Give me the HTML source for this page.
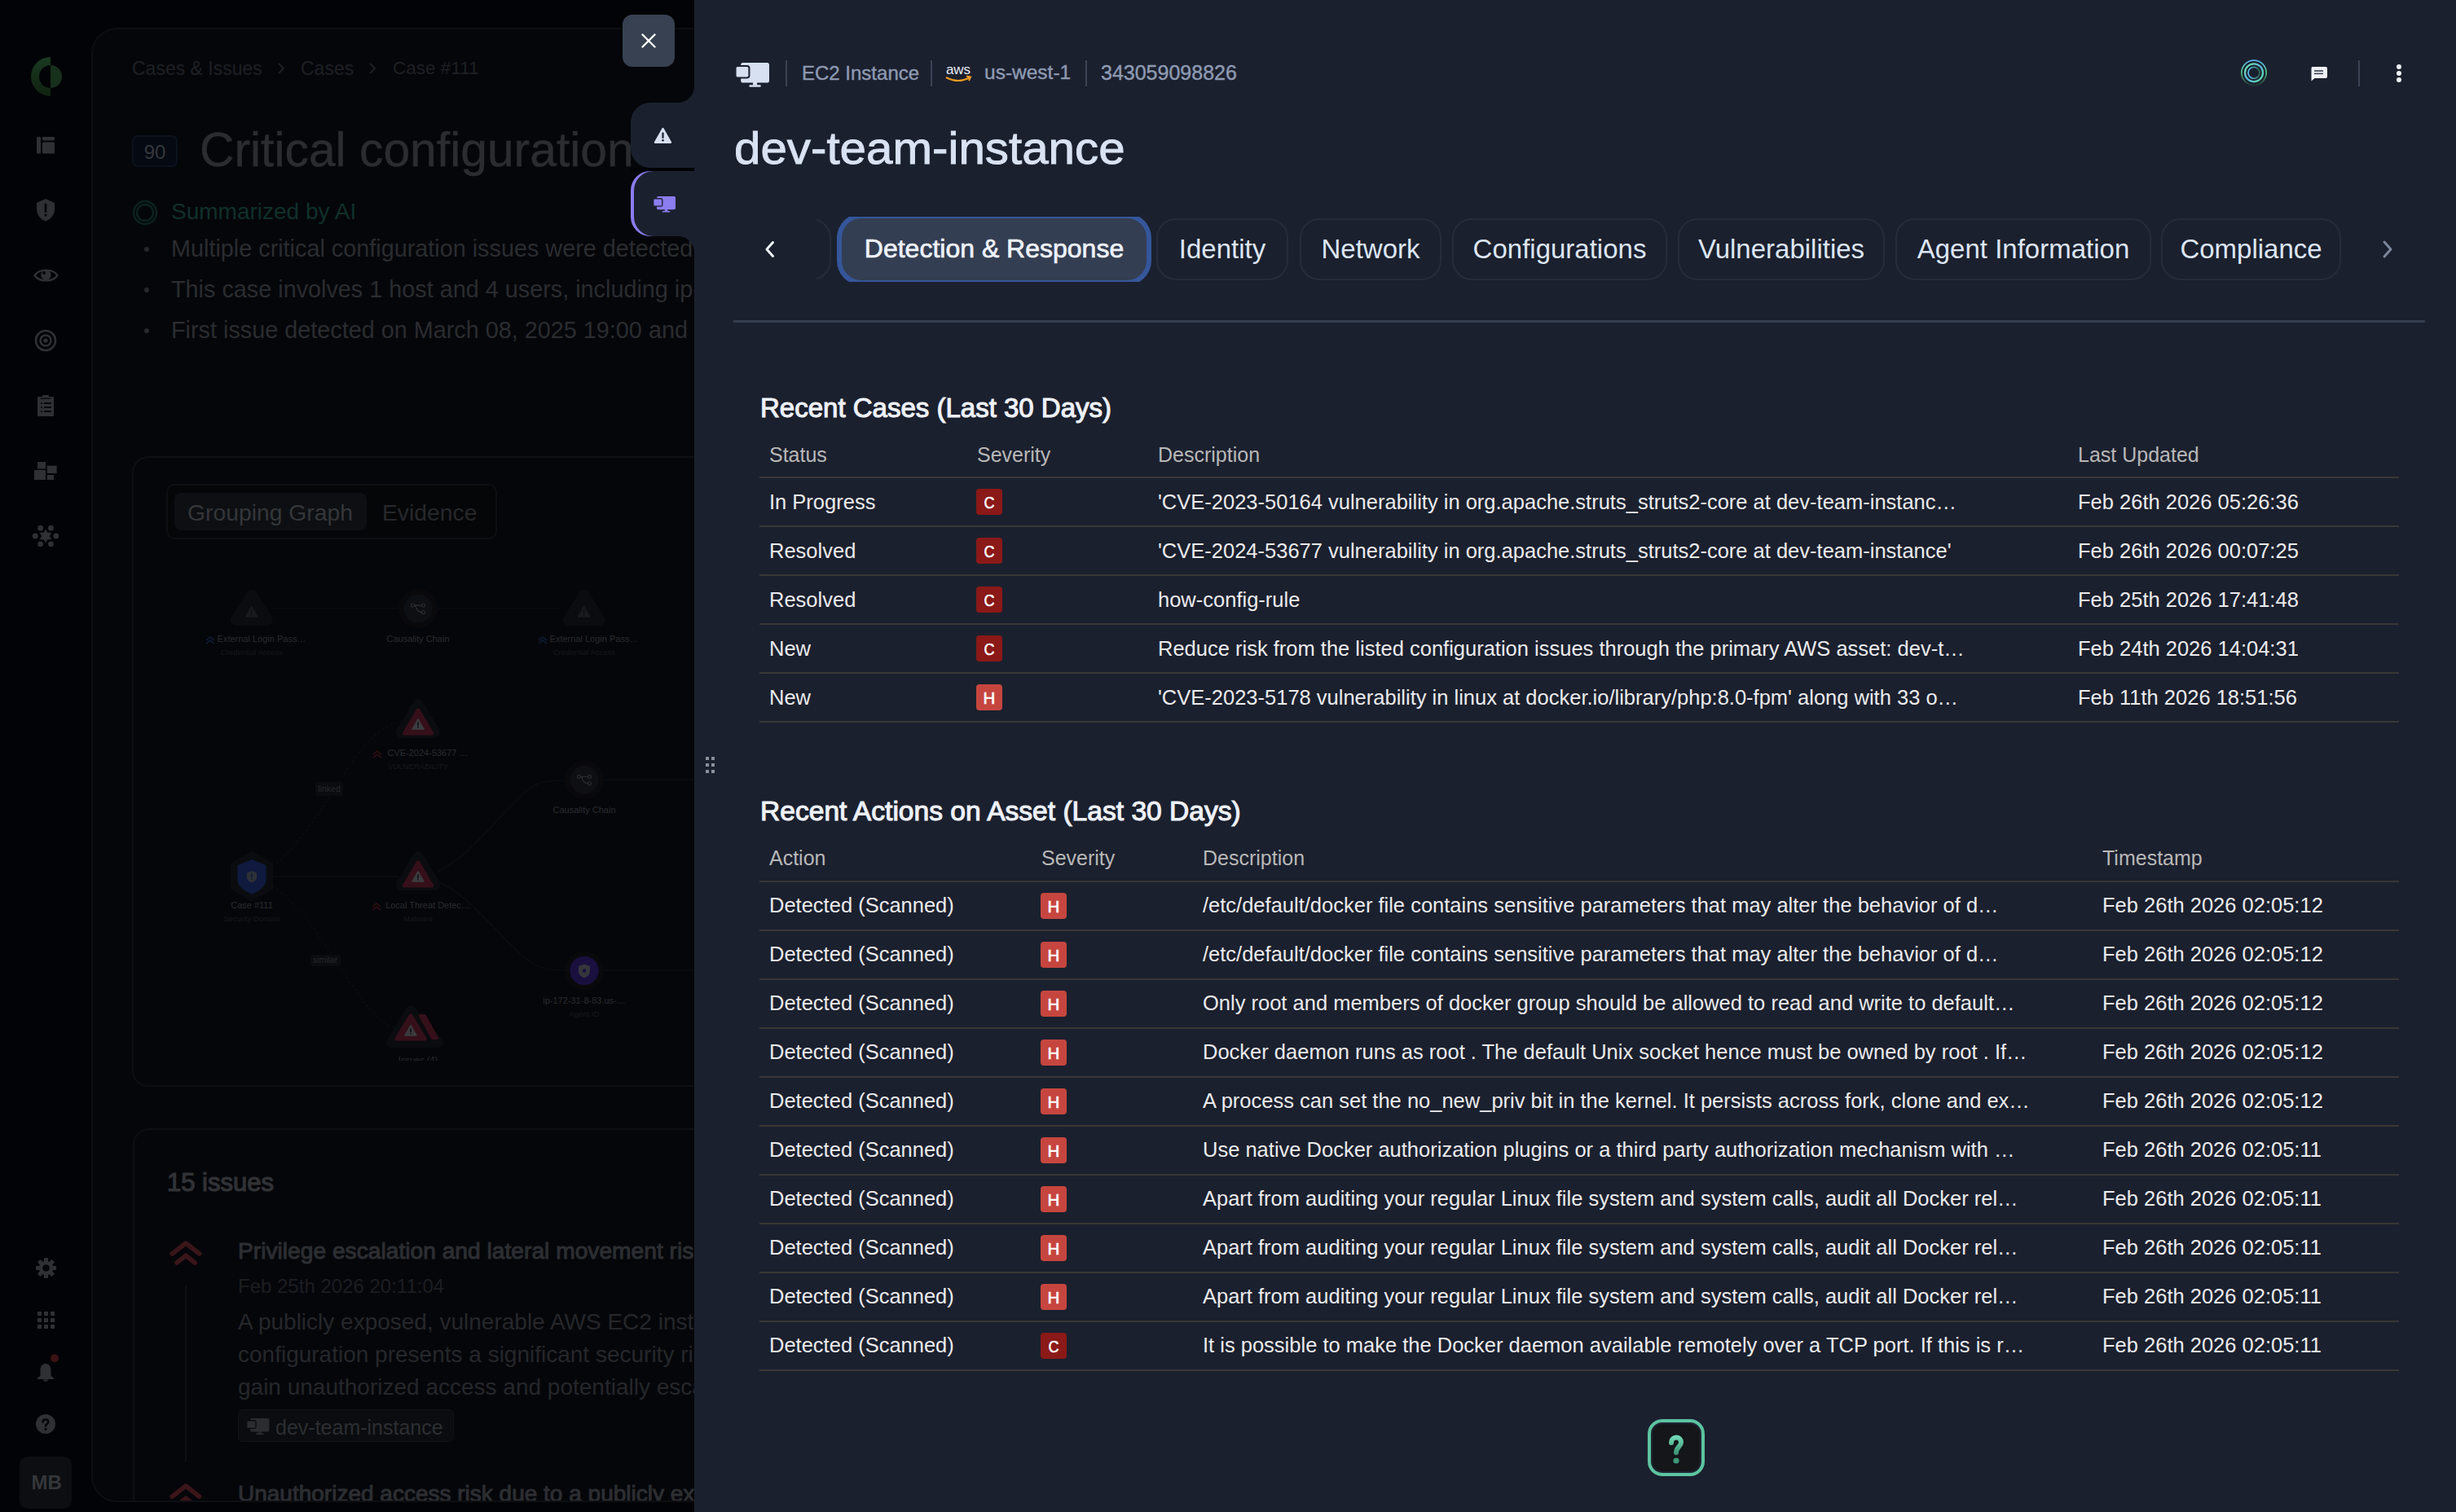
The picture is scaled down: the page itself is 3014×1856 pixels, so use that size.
<!DOCTYPE html>
<html><head><meta charset="utf-8"><style>
html,body{margin:0;padding:0;}
body{width:3014px;height:1856px;position:relative;overflow:hidden;background:#020306;font-family:"Liberation Sans", sans-serif;}
.t{position:absolute;white-space:nowrap;line-height:1;}
.r{position:absolute;}
</style></head><body>
<div class="r" style="left:0;top:0;width:852px;height:1856px;overflow:hidden">
<div class="r" style="left:112px;top:34px;width:900px;height:1810px;background:#05060a;border:2px solid #0c0e12;border-radius:32px;box-sizing:border-box;"></div>
<svg class="r" style="left:36px;top:70px" width="50" height="50" viewBox="36 70 50 50"><defs><linearGradient id="lg" x1="0" y1="0" x2="0" y2="1"><stop offset="0" stop-color="#1a3a22"/><stop offset="1" stop-color="#10220f"/></linearGradient></defs><path d="M62 70 A24 24 0 0 0 62 118 L62 108 A14 14 0 0 1 62 80 Z" fill="url(#lg)"/><path d="M62 80 A14 14 0 0 1 62 108 Z" fill="#16301c"/></svg>
<svg class="r" style="left:45px;top:168px" width="22" height="20.5"><rect x="0" y="0" width="5" height="20.5" rx="1" fill="#2f3033"/><rect x="7" y="0" width="15" height="4.5" rx="1" fill="#2f3033"/><rect x="7" y="6.5" width="15" height="14" rx="1" fill="#2f3033"/></svg>
<svg class="r" style="left:45px;top:244px" width="22" height="27.5" viewBox="0 0 24 28" preserveAspectRatio="none"><path d="M12 0 L24 5 V13 C24 21 18 26 12 28 C6 26 0 21 0 13 V5 Z" fill="#2f3033"/><rect x="10.5" y="6" width="3" height="11" fill="#05060a"/><rect x="10.5" y="19" width="3" height="3" fill="#05060a"/></svg>
<svg class="r" style="left:41px;top:328px" width="31" height="20" viewBox="0 0 31 20"><path d="M1.5 10 C7 1.5 24 1.5 29.5 10 C24 18.5 7 18.5 1.5 10 Z" fill="none" stroke="#2f3033" stroke-width="2.4"/><circle cx="15.5" cy="9.5" r="6.2" fill="#2f3033"/><circle cx="13" cy="7" r="2" fill="#05060a"/></svg>
<svg class="r" style="left:42px;top:404px" width="28" height="28"><circle cx="14" cy="14" r="12" fill="none" stroke="#2f3033" stroke-width="2.6"/><circle cx="14" cy="14" r="6.5" fill="none" stroke="#2f3033" stroke-width="2.6"/><circle cx="14" cy="14" r="2.6" fill="#2f3033"/></svg>
<svg class="r" style="left:46px;top:485px" width="20" height="26"><rect x="0" y="2" width="20" height="24" rx="1" fill="#2f3033"/><rect x="6" y="0" width="8" height="3" rx="1" fill="#2f3033"/><rect x="3.5" y="3.5" width="13" height="1.2" fill="#05060a"/><rect x="4" y="9" width="2" height="2" fill="#05060a"/><rect x="8" y="9" width="9" height="2" fill="#05060a"/><rect x="4" y="14" width="2" height="2" fill="#05060a"/><rect x="8" y="14" width="9" height="2" fill="#05060a"/><rect x="4" y="19" width="2" height="2" fill="#05060a"/><rect x="8" y="19" width="9" height="2" fill="#05060a"/></svg>
<svg class="r" style="left:42px;top:567px" width="28" height="23"><rect x="4" y="0" width="10" height="8.5" fill="#2f3033"/><rect x="0" y="10" width="14" height="12" fill="#2f3033"/><rect x="15.7" y="4.6" width="12" height="9.4" fill="#2f3033"/><rect x="15.7" y="16" width="8.3" height="6" fill="#2f3033"/></svg>
<svg class="r" style="left:40px;top:642px" width="32" height="32"><circle cx="28.8" cy="16.0" r="3.4" fill="#2f3033"/><circle cx="22.4" cy="25.8" r="3.4" fill="#2f3033"/><circle cx="9.6" cy="25.8" r="3.4" fill="#2f3033"/><circle cx="3.2" cy="16.0" r="3.4" fill="#2f3033"/><circle cx="9.6" cy="6.2" r="3.4" fill="#2f3033"/><circle cx="22.4" cy="6.2" r="3.4" fill="#2f3033"/><polygon points="16.0,7.5 13.6,11.8 8.6,11.8 11.2,16.0 8.6,20.2 13.6,20.2 16.0,24.5 18.4,20.2 23.4,20.3 20.8,16.0 23.4,11.8 18.4,11.8" fill="#2f3033"/></svg>
<svg class="r" style="left:43.5px;top:1543.5px" width="25" height="25"><rect x="10" y="0" width="5" height="6" rx="0.8" fill="#2f3033" transform="rotate(0 12.5 12.5)"/><rect x="10" y="0" width="5" height="6" rx="0.8" fill="#2f3033" transform="rotate(45 12.5 12.5)"/><rect x="10" y="0" width="5" height="6" rx="0.8" fill="#2f3033" transform="rotate(90 12.5 12.5)"/><rect x="10" y="0" width="5" height="6" rx="0.8" fill="#2f3033" transform="rotate(135 12.5 12.5)"/><rect x="10" y="0" width="5" height="6" rx="0.8" fill="#2f3033" transform="rotate(180 12.5 12.5)"/><rect x="10" y="0" width="5" height="6" rx="0.8" fill="#2f3033" transform="rotate(225 12.5 12.5)"/><rect x="10" y="0" width="5" height="6" rx="0.8" fill="#2f3033" transform="rotate(270 12.5 12.5)"/><rect x="10" y="0" width="5" height="6" rx="0.8" fill="#2f3033" transform="rotate(315 12.5 12.5)"/><circle cx="12.5" cy="12.5" r="8.8" fill="#2f3033"/><circle cx="12.5" cy="12.5" r="4.3" fill="#05060a"/></svg>
<svg class="r" style="left:46px;top:1610px" width="21" height="21"><rect x="0" y="0" width="5" height="5" fill="#2f3033"/><rect x="0" y="8" width="5" height="5" fill="#2f3033"/><rect x="0" y="16" width="5" height="5" fill="#2f3033"/><rect x="8" y="0" width="5" height="5" fill="#2f3033"/><rect x="8" y="8" width="5" height="5" fill="#2f3033"/><rect x="8" y="16" width="5" height="5" fill="#2f3033"/><rect x="16" y="0" width="5" height="5" fill="#2f3033"/><rect x="16" y="8" width="5" height="5" fill="#2f3033"/><rect x="16" y="16" width="5" height="5" fill="#2f3033"/></svg>
<svg class="r" style="left:45px;top:1660px" width="30" height="36" viewBox="0 0 30 36"><path d="M11 14 C6 14 4.5 18 4.5 22 V29 L1 31.5 Q0.5 33 2 33 H20 Q21.5 33 21 31.5 L17.5 29 V22 C17.5 18 16 14 11 14 Z" fill="#2f3033"/><path d="M8 33.5 H14 C14 36.5 8 36.5 8 33.5 Z" fill="#2f3033"/><circle cx="22" cy="7.2" r="5" fill="#3b1115"/></svg>
<svg class="r" style="left:44px;top:1736px" width="24" height="24"><circle cx="12" cy="12" r="12" fill="#2f3033"/><path d="M8.6 9.5 C8.6 5.5 15.4 5.5 15.4 9.3 C15.4 11.8 12 12 12 14.5" fill="none" stroke="#05060a" stroke-width="2.6" stroke-linecap="round"/><circle cx="12" cy="18.3" r="1.6" fill="#05060a"/></svg>
<div class="r" style="left:24px;top:1788px;width:64px;height:64px;background:#0d0e11;border-radius:10px;"></div>
<div class="t" style="left:38.5px;top:1808.1px;font-size:24px;color:#34363a;font-weight:700;">MB</div>
<div class="t" style="left:162px;top:72.5px;font-size:23px;color:#1d2025;font-weight:400;">Cases &amp; Issues</div>
<svg class="r" style="left:340px;top:76px" width="10" height="16"><path d="M2 2 L8 8 L2 14" fill="none" stroke="#1d2025" stroke-width="2"/></svg>
<div class="t" style="left:369px;top:72.5px;font-size:23px;color:#1d2025;font-weight:400;">Cases</div>
<svg class="r" style="left:452px;top:76px" width="10" height="16"><path d="M2 2 L8 8 L2 14" fill="none" stroke="#1d2025" stroke-width="2"/></svg>
<div class="t" style="left:482px;top:72.9px;font-size:22.5px;color:#1d2025;font-weight:400;">Case #111</div>
<div class="r" style="left:162px;top:166px;width:56px;height:39px;background:#050a12;border:2px solid #0b121d;border-radius:7px;box-sizing:border-box;"></div>
<div class="t" style="left:162px;width:56px;text-align:center;top:174.6px;font-size:24px;color:#34373c;">90</div>
<div class="t" style="left:245px;top:155.0px;font-size:58.8px;color:#2a2c30;font-weight:400;-webkit-text-stroke:0.5px #2a2c30;">Critical configuration</div>
<svg class="r" style="left:162px;top:245px" width="32" height="32"><circle cx="16" cy="16" r="14" fill="none" stroke="#0c221c" stroke-width="2.5"/><circle cx="16" cy="16" r="10" fill="none" stroke="#0c221c" stroke-width="2.5"/></svg>
<div class="t" style="left:210px;top:246.2px;font-size:28px;color:#10302a;font-weight:400;">Summarized by AI</div>
<div class="r" style="left:177px;top:303px;width:6px;height:6px;background:#26282c;border-radius:3px;"></div>
<div class="t" style="left:210px;top:290.5px;font-size:28.8px;color:#2a2c30;font-weight:400;">Multiple critical configuration issues were detected on the host</div>
<div class="r" style="left:177px;top:353px;width:6px;height:6px;background:#26282c;border-radius:3px;"></div>
<div class="t" style="left:210px;top:340.5px;font-size:28.8px;color:#2a2c30;font-weight:400;">This case involves 1 host and 4 users, including ip-172-31-8-83</div>
<div class="r" style="left:177px;top:403px;width:6px;height:6px;background:#26282c;border-radius:3px;"></div>
<div class="t" style="left:210px;top:390.5px;font-size:28.8px;color:#2a2c30;font-weight:400;">First issue detected on March 08, 2025 19:00 and the latest</div>
<div class="r" style="left:162px;top:560px;width:800px;height:774px;background:#05060a;border:2px solid #0d0f13;border-radius:20px;box-sizing:border-box;"></div>
<div class="r" style="left:204px;top:594px;width:406px;height:68px;background:#050607;border:2px solid #0d0f12;border-radius:10px;box-sizing:border-box;"></div>
<div class="r" style="left:214px;top:605px;width:236px;height:46px;background:#0d0f13;border-radius:8px;"></div>
<div class="t" style="left:230px;top:614.9px;font-size:28.3px;color:#34363a;font-weight:400;">Grouping Graph</div>
<div class="t" style="left:469px;top:614.9px;font-size:28.3px;color:#26282c;font-weight:400;">Evidence</div>
<svg class="r" style="left:163px;top:561px" width="700" height="773" viewBox="163 561 700 773"><path d="M334 747 H489 M537 747 H686" stroke="#0c0d10" stroke-width="1.5" fill="none"/><path d="M330 1076 H489" stroke="#0c0d10" stroke-width="1.5" fill="none"/><path d="M330 1068 C400 1010 420 930 470 895 C478 889 486 887 492 887" stroke="#0c0d10" stroke-width="1.5" fill="none" stroke-dasharray="3 3"/><path d="M330 1084 C380 1120 410 1180 440 1220 C460 1250 475 1261 486 1261" stroke="#0c0d10" stroke-width="1.5" fill="none" stroke-dasharray="3 3"/><path d="M537 1070 C580 1050 620 990 650 968 C660 960 670 958 693 958 M741 957 H870" stroke="#0c0d10" stroke-width="1.5" fill="none"/><path d="M537 1082 C580 1100 620 1160 650 1180 C662 1189 672 1191 699 1191 M735 1191 H870" stroke="#0c0d10" stroke-width="1.5" fill="none"/><path d="M308.7 731 L327.7 761 H289.7 Z" fill="#0b0c0f" stroke="#0b0c0f" stroke-width="14" stroke-linejoin="round"/><path d="M308.7 745.0 L315.7 757.0 H301.7 Z" fill="#1a1b1e" stroke="#1a1b1e" stroke-width="1.5" stroke-linejoin="round"/><rect x="307.9" y="748.5" width="1.6" height="4.5" fill="#0c0d10"/><rect x="307.9" y="754.0" width="1.6" height="1.5" fill="#0c0d10"/><path d="M716.6 731 L735.6 761 H697.6 Z" fill="#0b0c0f" stroke="#0b0c0f" stroke-width="14" stroke-linejoin="round"/><path d="M716.6 745.0 L723.6 757.0 H709.6 Z" fill="#1a1b1e" stroke="#1a1b1e" stroke-width="1.5" stroke-linejoin="round"/><rect x="715.8000000000001" y="748.5" width="1.6" height="4.5" fill="#0c0d10"/><rect x="715.8000000000001" y="754.0" width="1.6" height="1.5" fill="#0c0d10"/><circle cx="513" cy="747" r="24" fill="#09090c"/><circle cx="513" cy="747" r="17.5" fill="#0e0f12"/><path d="M508.5 743 H518.5 M509.5 743 C511 748 513 751.5 517 751.5" stroke="#2a2b2e" stroke-width="1.3" fill="none"/><circle cx="506.5" cy="743" r="2" fill="#0e0f12" stroke="#2a2b2e" stroke-width="1.2"/><circle cx="519.5" cy="743" r="2" fill="#0e0f12" stroke="#2a2b2e" stroke-width="1.2"/><circle cx="519.5" cy="751.5" r="2" fill="#0e0f12" stroke="#2a2b2e" stroke-width="1.2"/><circle cx="717" cy="957.3" r="24" fill="#09090c"/><circle cx="717" cy="957.3" r="17.5" fill="#0e0f12"/><path d="M712.5 953.3 H722.5 M713.5 953.3 C715 958.3 717 961.8 721 961.8" stroke="#2a2b2e" stroke-width="1.3" fill="none"/><circle cx="710.5" cy="953.3" r="2" fill="#0e0f12" stroke="#2a2b2e" stroke-width="1.2"/><circle cx="723.5" cy="953.3" r="2" fill="#0e0f12" stroke="#2a2b2e" stroke-width="1.2"/><circle cx="723.5" cy="961.8" r="2" fill="#0e0f12" stroke="#2a2b2e" stroke-width="1.2"/><path d="M513 865 L533.0 899 H493.0 Z" fill="#0b0c0f" stroke="#0b0c0f" stroke-width="14" stroke-linejoin="round"/><path d="M513 872 L529.5 900 H496.5 Z" fill="#35101a" stroke="#35101a" stroke-width="5" stroke-linejoin="round"/><path d="M513 883.0 L520.0 895.0 H506.0 Z" fill="#3b3c3f" stroke="#3b3c3f" stroke-width="1.5" stroke-linejoin="round"/><rect x="512.2" y="886.5" width="1.6" height="4.5" fill="#0c0d10"/><rect x="512.2" y="892.0" width="1.6" height="1.5" fill="#0c0d10"/><path d="M513 1052 L533.0 1086 H493.0 Z" fill="#0b0c0f" stroke="#0b0c0f" stroke-width="14" stroke-linejoin="round"/><path d="M513 1059 L529.5 1087 H496.5 Z" fill="#35101a" stroke="#35101a" stroke-width="5" stroke-linejoin="round"/><path d="M513 1070.0 L520.0 1082.0 H506.0 Z" fill="#3b3c3f" stroke="#3b3c3f" stroke-width="1.5" stroke-linejoin="round"/><rect x="512.2" y="1073.5" width="1.6" height="4.5" fill="#0c0d10"/><rect x="512.2" y="1079.0" width="1.6" height="1.5" fill="#0c0d10"/><path d="M309 1047 L333 1061 V1090 L309 1104 L285 1090 V1061 Z" fill="#0b0c0f" stroke="#0b0c0f" stroke-width="4" stroke-linejoin="round"/><path d="M309 1055 L326.5 1062 V1080 C326.5 1088 318 1094 309 1097.5 C300 1094 291.5 1088 291.5 1080 V1062 Z" fill="#0f1a3e"/><path d="M309 1069 L315 1071.5 V1077 C315 1080 312 1082.5 309 1083.5 C306 1082.5 303 1080 303 1077 V1071.5 Z" fill="#2e3036"/><rect x="308.2" y="1072" width="1.6" height="5" fill="#0f1a3e"/><rect x="308.2" y="1078.5" width="1.6" height="1.6" fill="#0f1a3e"/><circle cx="717" cy="1191.5" r="24" fill="#09090c"/><circle cx="717" cy="1191.5" r="17.6" fill="#1a1040"/><path d="M717 1183.5 L724 1186 V1192 C724 1196 721 1199 717 1200.5 C713 1199 710 1196 710 1192 V1186 Z" fill="#35363a"/><circle cx="717" cy="1191.5" r="2.2" fill="#1a1040"/><path d="M504 1240 L538 1280 H480 Z" fill="#0b0c0f" stroke="#0b0c0f" stroke-width="12" stroke-linejoin="round"/><path d="M521 1247 L536 1274 H531 L516 1247 Z" fill="#35101a" stroke="#35101a" stroke-width="4" stroke-linejoin="round"/><path d="M504 1247 L521.0 1275 H487.0 Z" fill="#35101a" stroke="#35101a" stroke-width="5" stroke-linejoin="round"/><path d="M504 1259.0 L511.0 1271.0 H497.0 Z" fill="#3b3c3f" stroke="#3b3c3f" stroke-width="1.5" stroke-linejoin="round"/><rect x="503.2" y="1262.5" width="1.6" height="4.5" fill="#0c0d10"/><rect x="503.2" y="1268.0" width="1.6" height="1.5" fill="#0c0d10"/><path d="M253 786 L258 782 L263 786 M253 790 L258 786 L263 790" stroke="#0e1a2e" stroke-width="1.8" fill="none"/><path d="M661 786 L666 782 L671 786 M661 790 L666 786 L671 790" stroke="#0e1a2e" stroke-width="1.8" fill="none"/><path d="M458 926 L463 922 L468 926 M458 930 L463 926 L468 930" stroke="#2a0c10" stroke-width="1.8" fill="none"/><path d="M457 1113 L462 1109 L467 1113 M457 1117 L462 1113 L467 1117" stroke="#2a0c10" stroke-width="1.8" fill="none"/></svg>
<div class="t" style="left:171px;width:300px;text-align:center;top:779.4px;font-size:11px;color:#2a2c30;">External Login Pass…</div>
<div class="t" style="left:159px;width:300px;text-align:center;top:796.3px;font-size:9.5px;color:#17181b;">Credential Access</div>
<div class="t" style="left:363px;width:300px;text-align:center;top:779.4px;font-size:11px;color:#2a2c30;">Causality Chain</div>
<div class="t" style="left:579px;width:300px;text-align:center;top:779.4px;font-size:11px;color:#2a2c30;">External Login Pass…</div>
<div class="t" style="left:567px;width:300px;text-align:center;top:796.3px;font-size:9.5px;color:#17181b;">Credential Access</div>
<div class="t" style="left:375px;width:300px;text-align:center;top:919.4px;font-size:11px;color:#2a2c30;">CVE-2024-53677 …</div>
<div class="t" style="left:363px;width:300px;text-align:center;top:936.3px;font-size:9.5px;color:#17181b;">VULNERABILITY</div>
<div class="r" style="left:387px;top:960px;width:34px;height:17px;background:#0b0c0f;border-radius:3px;"></div>
<div class="t" style="left:254px;width:300px;text-align:center;top:962.7px;font-size:10.5px;color:#26282b;">linked</div>
<div class="t" style="left:567px;width:300px;text-align:center;top:989.4px;font-size:11px;color:#2a2c30;">Causality Chain</div>
<div class="t" style="left:159px;width:300px;text-align:center;top:1106.4px;font-size:11px;color:#2a2c30;">Case #111</div>
<div class="t" style="left:159px;width:300px;text-align:center;top:1123.3px;font-size:9.5px;color:#17181b;">Security Domain</div>
<div class="t" style="left:375px;width:300px;text-align:center;top:1106.4px;font-size:11px;color:#2a2c30;">Local Threat Detec…</div>
<div class="t" style="left:363px;width:300px;text-align:center;top:1123.3px;font-size:9.5px;color:#17181b;">Malware</div>
<div class="r" style="left:381px;top:1172px;width:37px;height:14px;background:#0b0c0f;border-radius:3px;"></div>
<div class="t" style="left:249px;width:300px;text-align:center;top:1172.7px;font-size:10.5px;color:#26282b;">similar</div>
<div class="t" style="left:567px;width:300px;text-align:center;top:1223.4px;font-size:11px;color:#2a2c30;">ip-172-31-8-83.us-…</div>
<div class="t" style="left:567px;width:300px;text-align:center;top:1240.3px;font-size:9.5px;color:#17181b;">Agent ID</div>
<div class="r" style="left:163px;top:1280px;width:700px;height:22px;overflow:hidden"><div class="t" style="left:200px;width:300px;text-align:center;top:15.9px;font-size:11px;color:#2a2c30;">Issues (4)</div>
</div>
<div class="r" style="left:0;top:0;width:852px;height:1842px;overflow:hidden"><div class="r" style="left:163px;top:1385px;width:800px;height:600px;background:#05060a;border:2px solid #0d0f13;border-radius:20px;box-sizing:border-box;"></div>
<div class="t" style="left:205px;top:1435.7px;font-size:31px;color:#303236;font-weight:400;-webkit-text-stroke:1.2px #303236">15 issues</div>
<svg class="r" style="left:205px;top:1515px" width="46" height="46"><path d="M6.3 23.9 L23 10.9 L39.7 23.9" stroke="#3a1519" stroke-width="5.7" fill="none" stroke-linecap="round" stroke-linejoin="round"/><path d="M12 35 L23 26.3 L34 35" stroke="#3a1519" stroke-width="5.7" fill="none" stroke-linecap="round" stroke-linejoin="round"/></svg>
<div class="r" style="left:227px;top:1578px;width:2px;height:217px;background:#0e1013;"></div>
<div class="t" style="left:292px;top:1521.0px;font-size:28.2px;color:#2c2e32;font-weight:400;-webkit-text-stroke:1px #2c2e32">Privilege escalation and lateral movement risk</div>
<div class="t" style="left:292px;top:1566.6px;font-size:24px;color:#1c1e22;font-weight:400;">Feb 25th 2026 20:11:04</div>
<div class="t" style="left:292px;top:1609.2px;font-size:28px;color:#25272b;font-weight:400;">A publicly exposed, vulnerable AWS EC2 instance</div>
<div class="t" style="left:292px;top:1649.2px;font-size:28px;color:#25272b;font-weight:400;">configuration presents a significant security risk</div>
<div class="t" style="left:292px;top:1689.2px;font-size:28px;color:#25272b;font-weight:400;">gain unauthorized access and potentially escalate</div>
<div class="r" style="left:292px;top:1730px;width:265px;height:40px;background:#0b0c0f;border:1px solid #121317;border-radius:6px;box-sizing:border-box;"></div>
<svg class="r" style="left:303px;top:1741px" width="27.5" height="19.9" viewBox="0 0 40 29"><rect x="6" y="0" width="34" height="24" rx="2.5" fill="#2a2c30"/><rect x="20.5" y="23" width="5" height="4" fill="#2a2c30"/><rect x="16" y="26.5" width="14" height="2.5" rx="1" fill="#2a2c30"/><rect x="-0.5" y="4" width="16.5" height="14" rx="2.5" fill="#2a2c30" stroke="#0b0c0f" stroke-width="2"/></svg>
<div class="t" style="left:338px;top:1739.8px;font-size:25px;color:#2c2e32;font-weight:400;">dev-team-instance</div>
<svg class="r" style="left:205px;top:1813px" width="46" height="46"><path d="M6.3 23.9 L23 10.9 L39.7 23.9" stroke="#3a1519" stroke-width="5.7" fill="none" stroke-linecap="round" stroke-linejoin="round"/><path d="M12 35 L23 26.3 L34 35" stroke="#3a1519" stroke-width="5.7" fill="none" stroke-linecap="round" stroke-linejoin="round"/></svg>
<div class="t" style="left:292px;top:1820.2px;font-size:28px;color:#2c2e32;font-weight:400;-webkit-text-stroke:1px #2c2e32">Unauthorized access risk due to a publicly exposed</div>
</div></div>
<div class="r" style="left:852px;top:0px;width:2162px;height:1856px;background:#1b202e;"></div>
<div class="r" style="left:832px;top:106px;width:20px;height:20px;background:radial-gradient(circle at 0 0, transparent 19.5px, #1b202e 20.5px);"></div>
<div class="r" style="left:774px;top:126px;width:100px;height:80px;background:#1b202e;border-radius:24px 0 0 24px;"></div>
<div class="r" style="left:774px;top:206px;width:78px;height:4px;background:#020306;"></div>
<div class="r" style="left:774px;top:210px;width:100px;height:80px;background:#1b202e;border-radius:24px 0 0 24px;box-shadow:inset 4px 0 0 #8b7cf0;"></div>
<div class="r" style="left:832px;top:290px;width:20px;height:20px;background:radial-gradient(circle at 0 100%, transparent 19.5px, #1b202e 20.5px);"></div>
<svg class="r" style="left:802px;top:156px" width="23" height="21" viewBox="0 0 23 21"><path d="M11.5 2 L21 18.8 H2 Z" fill="#d6e0f0" stroke="#d6e0f0" stroke-width="2.4" stroke-linejoin="round"/><rect x="10.4" y="6.5" width="2.2" height="7.5" rx="1" fill="#1b202e"/><circle cx="11.5" cy="16.3" r="1.3" fill="#1b202e"/></svg>
<svg class="r" style="left:802px;top:241px" width="27.0" height="19.6" viewBox="0 0 40 29"><rect x="6" y="0" width="34" height="24" rx="2.5" fill="#8b7cf0"/><rect x="20.5" y="23" width="5" height="4" fill="#8b7cf0"/><rect x="16" y="26.5" width="14" height="2.5" rx="1" fill="#8b7cf0"/><rect x="-0.5" y="4" width="16.5" height="14" rx="2.5" fill="#8b7cf0" stroke="#1b202e" stroke-width="2"/></svg>
<div class="r" style="left:764px;top:18px;width:64px;height:64px;background:#374151;border-radius:12px;"></div>
<svg class="r" style="left:787px;top:41px" width="18" height="18"><path d="M1.5 1.5 L16.5 16.5 M16.5 1.5 L1.5 16.5" stroke="#ffffff" stroke-width="2.4" stroke-linecap="round"/></svg>
<svg class="r" style="left:903px;top:77px" width="41.0" height="29.7" viewBox="0 0 40 29"><rect x="6" y="0" width="34" height="24" rx="2.5" fill="#d6e0f0"/><rect x="20.5" y="23" width="5" height="4" fill="#d6e0f0"/><rect x="16" y="26.5" width="14" height="2.5" rx="1" fill="#d6e0f0"/><rect x="-0.5" y="4" width="16.5" height="14" rx="2.5" fill="#d6e0f0" stroke="#1b202e" stroke-width="2"/></svg>
<div class="r" style="left:964px;top:74px;width:2px;height:32px;background:#3b4354;"></div>
<div class="r" style="left:1142px;top:74px;width:2px;height:32px;background:#3b4354;"></div>
<div class="r" style="left:1332px;top:74px;width:2px;height:32px;background:#3b4354;"></div>
<div class="r" style="left:2894px;top:74px;width:2px;height:32px;background:#3b4354;"></div>
<div class="t" style="left:984px;top:77.6px;font-size:24px;color:#8e9ab2;font-weight:400;-webkit-text-stroke:0.4px #8e9ab2">EC2 Instance</div>
<svg class="r" style="left:1159px;top:78px" width="36" height="26" viewBox="0 0 36 26"><text x="17" y="13" font-family="Liberation Sans" font-size="17" text-anchor="middle" fill="#e8edf5" textLength="30">aws</text><path d="M2 17 Q17 25 31 17" stroke="#f29c1f" stroke-width="2.2" fill="none"/><path d="M27 15.5 L32 16.5 L30 21" stroke="#f29c1f" stroke-width="2" fill="none"/></svg>
<div class="t" style="left:1208px;top:77.2px;font-size:24.5px;color:#8e9ab2;font-weight:400;-webkit-text-stroke:0.4px #8e9ab2">us-west-1</div>
<div class="t" style="left:1351px;top:76.8px;font-size:25px;color:#8e9ab2;font-weight:400;-webkit-text-stroke:0.4px #8e9ab2">343059098826</div>
<svg class="r" style="left:2746px;top:69px" width="40" height="40" viewBox="0 0 40 40"><defs><linearGradient id="ga" x1="0" y1="0" x2="0" y2="1"><stop offset="0" stop-color="#5ab0ee"/><stop offset="0.45" stop-color="#4cc48a"/><stop offset="1" stop-color="#1f3a34"/></linearGradient><linearGradient id="gb" x1="0" y1="0" x2="1" y2="1"><stop offset="0" stop-color="#6ee49a"/><stop offset="0.5" stop-color="#5ab8e0"/><stop offset="1" stop-color="#5ee0a0"/></linearGradient><linearGradient id="gc" x1="0" y1="0" x2="1" y2="0"><stop offset="0" stop-color="#5ab8ee"/><stop offset="1" stop-color="#2a6a4e"/></linearGradient></defs><circle cx="20" cy="20.3" r="15.2" fill="none" stroke="url(#ga)" stroke-width="1.8"/><circle cx="20" cy="20.3" r="11" fill="none" stroke="url(#gb)" stroke-width="2.2"/><circle cx="20" cy="20.3" r="7" fill="none" stroke="url(#gc)" stroke-width="1.8"/></svg>
<svg class="r" style="left:2836px;top:82px" width="20" height="18" viewBox="0 0 20 18"><path d="M2 0 H18 Q20 0 20 2 V12 Q20 14 18 14 H4.5 L0.5 17.5 V2 Q0.5 0 2 0 Z" fill="#eef1f7"/><rect x="4" y="4.2" width="11" height="1.6" fill="#3a4150"/><rect x="4" y="7.6" width="11" height="1.6" fill="#3a4150"/></svg>
<div class="r" style="left:2941px;top:78.8px;width:6.4px;height:6.4px;background:#eef1f7;border-radius:50%;"></div>
<div class="r" style="left:2941px;top:86.8px;width:6.4px;height:6.4px;background:#eef1f7;border-radius:50%;"></div>
<div class="r" style="left:2941px;top:94.8px;width:6.4px;height:6.4px;background:#eef1f7;border-radius:50%;"></div>
<div class="t" style="left:901px;top:154.8px;font-size:55px;color:#d8e2f2;font-weight:400;-webkit-text-stroke:0.9px #d8e2f2;transform:scaleX(1.06);transform-origin:0 0;">dev-team-instance</div>
<svg class="r" style="left:937px;top:294px" width="16" height="24"><path d="M11.5 3.5 L4 12 L11.5 20.5" stroke="#f0f3f8" stroke-width="3" fill="none" stroke-linecap="round" stroke-linejoin="round"/></svg>
<div class="r" style="left:1002px;top:268px;width:18px;height:76px;overflow:hidden"><div class="r" style="left:-200px;top:0;width:218px;height:76px;border:2px solid #262c39;border-radius:24px;box-sizing:border-box"></div></div>
<div class="r" style="left:1020px;top:266px;width:400px;height:80px;overflow:hidden"><div class="r" style="left:7px;top:-4px;width:386px;height:88px;background:#35569a;border-radius:30px"></div><div class="r" style="left:13px;top:2px;width:374px;height:76px;background:#343e52;border-radius:24px"></div></div>
<div class="t" style="left:1033px;top:288.9px;width:374px;text-align:center;font-size:32px;color:#eef2fa;font-weight:400;-webkit-text-stroke:0.7px #eef2fa">Detection &amp; Response</div>
<div class="r" style="left:1419px;top:268px;width:162px;height:76px;border:2px solid #262c39;border-radius:24px;box-sizing:border-box;"></div>
<div class="t" style="left:1419px;top:288.9px;width:162px;text-align:center;font-size:33px;color:#dde6f5;">Identity</div>
<div class="r" style="left:1595px;top:268px;width:174px;height:76px;border:2px solid #262c39;border-radius:24px;box-sizing:border-box;"></div>
<div class="t" style="left:1595px;top:288.9px;width:174px;text-align:center;font-size:33px;color:#dde6f5;">Network</div>
<div class="r" style="left:1782px;top:268px;width:264px;height:76px;border:2px solid #262c39;border-radius:24px;box-sizing:border-box;"></div>
<div class="t" style="left:1782px;top:288.9px;width:264px;text-align:center;font-size:33px;color:#dde6f5;">Configurations</div>
<div class="r" style="left:2059px;top:268px;width:254px;height:76px;border:2px solid #262c39;border-radius:24px;box-sizing:border-box;"></div>
<div class="t" style="left:2059px;top:288.9px;width:254px;text-align:center;font-size:33px;color:#dde6f5;">Vulnerabilities</div>
<div class="r" style="left:2326px;top:268px;width:314px;height:76px;border:2px solid #262c39;border-radius:24px;box-sizing:border-box;"></div>
<div class="t" style="left:2326px;top:288.9px;width:314px;text-align:center;font-size:33px;color:#dde6f5;">Agent Information</div>
<div class="r" style="left:2652px;top:268px;width:221px;height:76px;border:2px solid #262c39;border-radius:24px;box-sizing:border-box;"></div>
<div class="t" style="left:2652px;top:288.9px;width:221px;text-align:center;font-size:33px;color:#dde6f5;">Compliance</div>
<svg class="r" style="left:2922px;top:294px" width="16" height="24"><path d="M4 3 L12 12 L4 21" stroke="#7d879c" stroke-width="3" fill="none" stroke-linecap="round" stroke-linejoin="round"/></svg>
<div class="r" style="left:900px;top:393px;width:2076px;height:3px;background:#353d4e;"></div>
<div class="r" style="left:866px;top:929px;width:4px;height:4px;background:#8a8f99;"></div>
<div class="r" style="left:866px;top:937px;width:4px;height:4px;background:#8a8f99;"></div>
<div class="r" style="left:866px;top:945px;width:4px;height:4px;background:#8a8f99;"></div>
<div class="r" style="left:873px;top:929px;width:4px;height:4px;background:#8a8f99;"></div>
<div class="r" style="left:873px;top:937px;width:4px;height:4px;background:#8a8f99;"></div>
<div class="r" style="left:873px;top:945px;width:4px;height:4px;background:#8a8f99;"></div>
<div class="t" style="left:933px;top:484.4px;font-size:33px;color:#eef1f8;font-weight:400;-webkit-text-stroke:1.1px #eef1f8">Recent Cases (Last 30 Days)</div>
<div class="t" style="left:944px;top:545.8px;font-size:25px;color:#b8b8b8;font-weight:400;">Status</div>
<div class="t" style="left:1199px;top:545.8px;font-size:25px;color:#b8b8b8;font-weight:400;">Severity</div>
<div class="t" style="left:1421px;top:545.8px;font-size:25px;color:#b8b8b8;font-weight:400;">Description</div>
<div class="t" style="left:2550px;top:545.8px;font-size:25px;color:#b8b8b8;font-weight:400;">Last Updated</div>
<div class="r" style="left:932px;top:585px;width:2012px;height:2px;background:#393733;"></div>
<div class="t" style="left:944px;top:603.5px;font-size:25.5px;color:#ebebed;font-weight:400;">In Progress</div>
<div class="r" style="left:1198px;top:600px;width:32px;height:32px;background:#8a1918;border-radius:4px;"></div>
<div class="t" style="left:1198px;top:607.0px;width:32px;text-align:center;font-size:20.5px;font-weight:400;color:#ffffff;-webkit-text-stroke:0.6px #ffffff;transform:scaleX(0.88);">C</div>
<div class="t" style="left:1421px;top:603.5px;font-size:25.5px;color:#ebebed;font-weight:400;">'CVE-2023-50164 vulnerability in org.apache.struts_struts2-core at dev-team-instanc…</div>
<div class="t" style="left:2550px;top:603.5px;font-size:25.5px;color:#ebebed;font-weight:400;">Feb 26th 2026 05:26:36</div>
<div class="r" style="left:932px;top:645px;width:2012px;height:2px;background:#393733;"></div>
<div class="t" style="left:944px;top:663.6px;font-size:25.5px;color:#ebebed;font-weight:400;">Resolved</div>
<div class="r" style="left:1198px;top:660px;width:32px;height:32px;background:#8a1918;border-radius:4px;"></div>
<div class="t" style="left:1198px;top:667.0px;width:32px;text-align:center;font-size:20.5px;font-weight:400;color:#ffffff;-webkit-text-stroke:0.6px #ffffff;transform:scaleX(0.88);">C</div>
<div class="t" style="left:1421px;top:663.6px;font-size:25.5px;color:#ebebed;font-weight:400;">'CVE-2024-53677 vulnerability in org.apache.struts_struts2-core at dev-team-instance'</div>
<div class="t" style="left:2550px;top:663.6px;font-size:25.5px;color:#ebebed;font-weight:400;">Feb 26th 2026 00:07:25</div>
<div class="r" style="left:932px;top:705px;width:2012px;height:2px;background:#393733;"></div>
<div class="t" style="left:944px;top:723.6px;font-size:25.5px;color:#ebebed;font-weight:400;">Resolved</div>
<div class="r" style="left:1198px;top:720px;width:32px;height:32px;background:#8a1918;border-radius:4px;"></div>
<div class="t" style="left:1198px;top:727.0px;width:32px;text-align:center;font-size:20.5px;font-weight:400;color:#ffffff;-webkit-text-stroke:0.6px #ffffff;transform:scaleX(0.88);">C</div>
<div class="t" style="left:1421px;top:723.6px;font-size:25.5px;color:#ebebed;font-weight:400;">how-config-rule</div>
<div class="t" style="left:2550px;top:723.6px;font-size:25.5px;color:#ebebed;font-weight:400;">Feb 25th 2026 17:41:48</div>
<div class="r" style="left:932px;top:765px;width:2012px;height:2px;background:#393733;"></div>
<div class="t" style="left:944px;top:783.7px;font-size:25.5px;color:#ebebed;font-weight:400;">New</div>
<div class="r" style="left:1198px;top:780px;width:32px;height:32px;background:#8a1918;border-radius:4px;"></div>
<div class="t" style="left:1198px;top:787.0px;width:32px;text-align:center;font-size:20.5px;font-weight:400;color:#ffffff;-webkit-text-stroke:0.6px #ffffff;transform:scaleX(0.88);">C</div>
<div class="t" style="left:1421px;top:783.7px;font-size:25.5px;color:#ebebed;font-weight:400;">Reduce risk from the listed configuration issues through the primary AWS asset: dev-t…</div>
<div class="t" style="left:2550px;top:783.7px;font-size:25.5px;color:#ebebed;font-weight:400;">Feb 24th 2026 14:04:31</div>
<div class="r" style="left:932px;top:825px;width:2012px;height:2px;background:#393733;"></div>
<div class="t" style="left:944px;top:843.7px;font-size:25.5px;color:#ebebed;font-weight:400;">New</div>
<div class="r" style="left:1198px;top:840px;width:32px;height:32px;background:#c6463f;border-radius:4px;"></div>
<div class="t" style="left:1198px;top:847.0px;width:32px;text-align:center;font-size:20.5px;font-weight:400;color:#ffffff;-webkit-text-stroke:0.6px #ffffff;">H</div>
<div class="t" style="left:1421px;top:843.7px;font-size:25.5px;color:#ebebed;font-weight:400;">'CVE-2023-5178 vulnerability in linux at docker.io/library/php:8.0-fpm' along with 33 o…</div>
<div class="t" style="left:2550px;top:843.7px;font-size:25.5px;color:#ebebed;font-weight:400;">Feb 11th 2026 18:51:56</div>
<div class="r" style="left:932px;top:885px;width:2012px;height:2px;background:#393733;"></div>
<div class="t" style="left:933px;top:979.4px;font-size:33.6px;color:#eef1f8;font-weight:400;-webkit-text-stroke:1.1px #eef1f8">Recent Actions on Asset (Last 30 Days)</div>
<div class="t" style="left:944px;top:1040.8px;font-size:25px;color:#b8b8b8;font-weight:400;">Action</div>
<div class="t" style="left:1278px;top:1040.8px;font-size:25px;color:#b8b8b8;font-weight:400;">Severity</div>
<div class="t" style="left:1476px;top:1040.8px;font-size:25px;color:#b8b8b8;font-weight:400;">Description</div>
<div class="t" style="left:2580px;top:1040.8px;font-size:25px;color:#b8b8b8;font-weight:400;">Timestamp</div>
<div class="r" style="left:932px;top:1081px;width:2012px;height:2px;background:#393733;"></div>
<div class="t" style="left:944px;top:1098.6px;font-size:25.5px;color:#ebebed;font-weight:400;">Detected (Scanned)</div>
<div class="r" style="left:1277px;top:1096px;width:32px;height:32px;background:#c6463f;border-radius:4px;"></div>
<div class="t" style="left:1277px;top:1103.0px;width:32px;text-align:center;font-size:20.5px;font-weight:400;color:#ffffff;-webkit-text-stroke:0.6px #ffffff;">H</div>
<div class="t" style="left:1476px;top:1098.6px;font-size:25.5px;color:#ebebed;font-weight:400;">/etc/default/docker file contains sensitive parameters that may alter the behavior of d…</div>
<div class="t" style="left:2580px;top:1098.6px;font-size:25.5px;color:#ebebed;font-weight:400;">Feb 26th 2026 02:05:12</div>
<div class="r" style="left:932px;top:1141px;width:2012px;height:2px;background:#393733;"></div>
<div class="t" style="left:944px;top:1158.6px;font-size:25.5px;color:#ebebed;font-weight:400;">Detected (Scanned)</div>
<div class="r" style="left:1277px;top:1156px;width:32px;height:32px;background:#c6463f;border-radius:4px;"></div>
<div class="t" style="left:1277px;top:1163.0px;width:32px;text-align:center;font-size:20.5px;font-weight:400;color:#ffffff;-webkit-text-stroke:0.6px #ffffff;">H</div>
<div class="t" style="left:1476px;top:1158.6px;font-size:25.5px;color:#ebebed;font-weight:400;">/etc/default/docker file contains sensitive parameters that may alter the behavior of d…</div>
<div class="t" style="left:2580px;top:1158.6px;font-size:25.5px;color:#ebebed;font-weight:400;">Feb 26th 2026 02:05:12</div>
<div class="r" style="left:932px;top:1201px;width:2012px;height:2px;background:#393733;"></div>
<div class="t" style="left:944px;top:1218.6px;font-size:25.5px;color:#ebebed;font-weight:400;">Detected (Scanned)</div>
<div class="r" style="left:1277px;top:1216px;width:32px;height:32px;background:#c6463f;border-radius:4px;"></div>
<div class="t" style="left:1277px;top:1223.0px;width:32px;text-align:center;font-size:20.5px;font-weight:400;color:#ffffff;-webkit-text-stroke:0.6px #ffffff;">H</div>
<div class="t" style="left:1476px;top:1218.6px;font-size:25.5px;color:#ebebed;font-weight:400;">Only root and members of docker group should be allowed to read and write to default…</div>
<div class="t" style="left:2580px;top:1218.6px;font-size:25.5px;color:#ebebed;font-weight:400;">Feb 26th 2026 02:05:12</div>
<div class="r" style="left:932px;top:1261px;width:2012px;height:2px;background:#393733;"></div>
<div class="t" style="left:944px;top:1278.6px;font-size:25.5px;color:#ebebed;font-weight:400;">Detected (Scanned)</div>
<div class="r" style="left:1277px;top:1276px;width:32px;height:32px;background:#c6463f;border-radius:4px;"></div>
<div class="t" style="left:1277px;top:1283.0px;width:32px;text-align:center;font-size:20.5px;font-weight:400;color:#ffffff;-webkit-text-stroke:0.6px #ffffff;">H</div>
<div class="t" style="left:1476px;top:1278.6px;font-size:25.5px;color:#ebebed;font-weight:400;">Docker daemon runs as root . The default Unix socket hence must be owned by root . If…</div>
<div class="t" style="left:2580px;top:1278.6px;font-size:25.5px;color:#ebebed;font-weight:400;">Feb 26th 2026 02:05:12</div>
<div class="r" style="left:932px;top:1321px;width:2012px;height:2px;background:#393733;"></div>
<div class="t" style="left:944px;top:1338.6px;font-size:25.5px;color:#ebebed;font-weight:400;">Detected (Scanned)</div>
<div class="r" style="left:1277px;top:1336px;width:32px;height:32px;background:#c6463f;border-radius:4px;"></div>
<div class="t" style="left:1277px;top:1343.0px;width:32px;text-align:center;font-size:20.5px;font-weight:400;color:#ffffff;-webkit-text-stroke:0.6px #ffffff;">H</div>
<div class="t" style="left:1476px;top:1338.6px;font-size:25.5px;color:#ebebed;font-weight:400;">A process can set the no_new_priv bit in the kernel. It persists across fork, clone and ex…</div>
<div class="t" style="left:2580px;top:1338.6px;font-size:25.5px;color:#ebebed;font-weight:400;">Feb 26th 2026 02:05:12</div>
<div class="r" style="left:932px;top:1381px;width:2012px;height:2px;background:#393733;"></div>
<div class="t" style="left:944px;top:1398.6px;font-size:25.5px;color:#ebebed;font-weight:400;">Detected (Scanned)</div>
<div class="r" style="left:1277px;top:1396px;width:32px;height:32px;background:#c6463f;border-radius:4px;"></div>
<div class="t" style="left:1277px;top:1403.0px;width:32px;text-align:center;font-size:20.5px;font-weight:400;color:#ffffff;-webkit-text-stroke:0.6px #ffffff;">H</div>
<div class="t" style="left:1476px;top:1398.6px;font-size:25.5px;color:#ebebed;font-weight:400;">Use native Docker authorization plugins or a third party authorization mechanism with …</div>
<div class="t" style="left:2580px;top:1398.6px;font-size:25.5px;color:#ebebed;font-weight:400;">Feb 26th 2026 02:05:11</div>
<div class="r" style="left:932px;top:1441px;width:2012px;height:2px;background:#393733;"></div>
<div class="t" style="left:944px;top:1458.6px;font-size:25.5px;color:#ebebed;font-weight:400;">Detected (Scanned)</div>
<div class="r" style="left:1277px;top:1456px;width:32px;height:32px;background:#c6463f;border-radius:4px;"></div>
<div class="t" style="left:1277px;top:1463.0px;width:32px;text-align:center;font-size:20.5px;font-weight:400;color:#ffffff;-webkit-text-stroke:0.6px #ffffff;">H</div>
<div class="t" style="left:1476px;top:1458.6px;font-size:25.5px;color:#ebebed;font-weight:400;">Apart from auditing your regular Linux file system and system calls, audit all Docker rel…</div>
<div class="t" style="left:2580px;top:1458.6px;font-size:25.5px;color:#ebebed;font-weight:400;">Feb 26th 2026 02:05:11</div>
<div class="r" style="left:932px;top:1501px;width:2012px;height:2px;background:#393733;"></div>
<div class="t" style="left:944px;top:1518.6px;font-size:25.5px;color:#ebebed;font-weight:400;">Detected (Scanned)</div>
<div class="r" style="left:1277px;top:1516px;width:32px;height:32px;background:#c6463f;border-radius:4px;"></div>
<div class="t" style="left:1277px;top:1523.0px;width:32px;text-align:center;font-size:20.5px;font-weight:400;color:#ffffff;-webkit-text-stroke:0.6px #ffffff;">H</div>
<div class="t" style="left:1476px;top:1518.6px;font-size:25.5px;color:#ebebed;font-weight:400;">Apart from auditing your regular Linux file system and system calls, audit all Docker rel…</div>
<div class="t" style="left:2580px;top:1518.6px;font-size:25.5px;color:#ebebed;font-weight:400;">Feb 26th 2026 02:05:11</div>
<div class="r" style="left:932px;top:1561px;width:2012px;height:2px;background:#393733;"></div>
<div class="t" style="left:944px;top:1578.6px;font-size:25.5px;color:#ebebed;font-weight:400;">Detected (Scanned)</div>
<div class="r" style="left:1277px;top:1576px;width:32px;height:32px;background:#c6463f;border-radius:4px;"></div>
<div class="t" style="left:1277px;top:1583.0px;width:32px;text-align:center;font-size:20.5px;font-weight:400;color:#ffffff;-webkit-text-stroke:0.6px #ffffff;">H</div>
<div class="t" style="left:1476px;top:1578.6px;font-size:25.5px;color:#ebebed;font-weight:400;">Apart from auditing your regular Linux file system and system calls, audit all Docker rel…</div>
<div class="t" style="left:2580px;top:1578.6px;font-size:25.5px;color:#ebebed;font-weight:400;">Feb 26th 2026 02:05:11</div>
<div class="r" style="left:932px;top:1621px;width:2012px;height:2px;background:#393733;"></div>
<div class="t" style="left:944px;top:1638.6px;font-size:25.5px;color:#ebebed;font-weight:400;">Detected (Scanned)</div>
<div class="r" style="left:1277px;top:1636px;width:32px;height:32px;background:#8a1918;border-radius:4px;"></div>
<div class="t" style="left:1277px;top:1643.0px;width:32px;text-align:center;font-size:20.5px;font-weight:400;color:#ffffff;-webkit-text-stroke:0.6px #ffffff;transform:scaleX(0.88);">C</div>
<div class="t" style="left:1476px;top:1638.6px;font-size:25.5px;color:#ebebed;font-weight:400;">It is possible to make the Docker daemon available remotely over a TCP port. If this is r…</div>
<div class="t" style="left:2580px;top:1638.6px;font-size:25.5px;color:#ebebed;font-weight:400;">Feb 26th 2026 02:05:11</div>
<div class="r" style="left:932px;top:1681px;width:2012px;height:2px;background:#393733;"></div>
<div class="r" style="left:2022px;top:1742px;width:70px;height:70px;background:#141619;border:4px solid #5cc4a0;border-radius:18px;box-sizing:border-box;box-shadow:inset 0 0 0 2px #1f2535;"></div>
<svg class="r" style="left:2022px;top:1742px" width="70" height="70" viewBox="0 0 70 70"><defs><linearGradient id="hg" x1="0" y1="0" x2="0" y2="1"><stop offset="0" stop-color="#6fd6b2"/><stop offset="1" stop-color="#3d9878"/></linearGradient></defs><path d="M29 29 C29 20.5 41 20.5 41 28.5 C41 33.5 35 34.5 35 41" fill="none" stroke="url(#hg)" stroke-width="6" stroke-linecap="round"/><circle cx="35" cy="51" r="3.6" fill="#3d9878"/></svg>

</body></html>
